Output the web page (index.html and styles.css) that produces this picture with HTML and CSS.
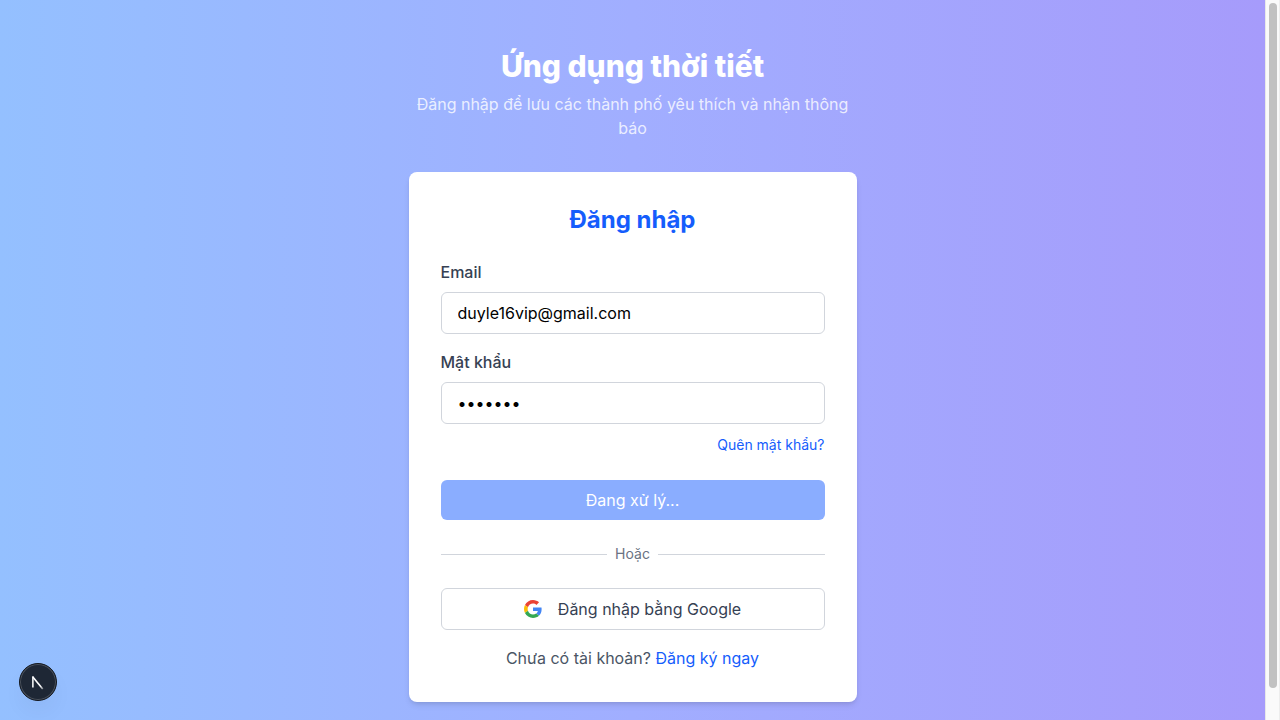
FILE: index.html
```html
<!DOCTYPE html>
<html lang="vi">
<head>
<meta charset="utf-8">
<meta name="viewport" content="width=device-width, initial-scale=1">
<title>Ứng dụng thời tiết</title>
<link rel="stylesheet" href="styles.css">
</head>
<body class="page">
<main class="screen">
  <div class="column">
    <header class="intro">
      <h1 class="intro-title">Ứng dụng thời tiết</h1>
      <p class="intro-text">Đăng nhập để lưu các thành phố yêu thích và nhận thông báo</p>
    </header>
    <section class="card">
      <h2 class="card-title">Đăng nhập</h2>
      <form class="form">
        <div class="field">
          <label class="label" for="email">Email</label>
          <input class="input" id="email" type="email" value="duyle16vip@gmail.com">
        </div>
        <div class="field">
          <label class="label" for="password">Mật khẩu</label>
          <input class="input" id="password" type="password" value="1234567">
        </div>
        <div class="forgot"><a class="link forgot-link" href="#">Quên mật khẩu?</a></div>
        <button class="submit" type="submit" disabled>Đang xử lý...</button>
      </form>
      <div class="divider">Hoặc</div>
      <button class="google" type="button">
        <svg class="google-icon" viewBox="0 0 48 48" aria-hidden="true">
          <path fill="#EA4335" d="M24 9.5c3.54 0 6.71 1.22 9.21 3.6l6.85-6.85C35.9 2.38 30.47 0 24 0 14.62 0 6.51 5.38 2.56 13.22l7.98 6.19C12.43 13.72 17.74 9.5 24 9.5z"/>
          <path fill="#4285F4" d="M46.98 24.55c0-1.57-.15-3.09-.38-4.55H24v9.02h12.94c-.58 2.96-2.26 5.48-4.78 7.18l7.73 6c4.51-4.18 7.09-10.36 7.09-17.65z"/>
          <path fill="#FBBC05" d="M10.53 28.59c-.48-1.45-.76-2.99-.76-4.59s.27-3.14.76-4.59l-7.98-6.19C.92 16.46 0 20.12 0 24c0 3.88.92 7.54 2.56 10.78l7.97-6.19z"/>
          <path fill="#34A853" d="M24 48c6.48 0 11.93-2.13 15.89-5.81l-7.73-6c-2.15 1.45-4.92 2.3-8.16 2.3-6.26 0-11.57-4.22-13.47-9.91l-7.98 6.19C6.51 42.62 14.62 48 24 48z"/>
        </svg>
        <span>Đăng nhập bằng Google</span>
      </button>
      <p class="signup">Chưa có tài khoản? <a class="link" href="#">Đăng ký ngay</a></p>
    </section>
  </div>
</main>
<button class="dev-badge" type="button" aria-label="Dev Tools">
  <svg class="dev-icon" viewBox="0 0 38 38" aria-hidden="true">
    <defs>
      <linearGradient id="fade" gradientUnits="userSpaceOnUse" x1="19" y1="19" x2="25" y2="27">
        <stop offset="0.5" stop-color="#fff"/>
        <stop offset="1" stop-color="#fff" stop-opacity="0.3"/>
      </linearGradient>
    </defs>
    <path d="M13.6 13.6L24 26.4" fill="none" stroke="url(#fade)" stroke-width="1.7"/>
    <path d="M13.6 24.8V13" stroke="#fff" stroke-width="1.6"/>
  </svg>
</button>
<div class="scrollbar" aria-hidden="true"><div class="scrollbar-thumb"></div></div>
</body>
</html>
```

FILE: styles.css
```css
*, *::before, *::after { box-sizing: border-box; }

.page {
  margin: 0;
  padding-right: 15px;
  height: 100vh;
  overflow: hidden;
  font-family: Inter, "Noto Sans", sans-serif;
  font-size: 16px;
  line-height: 24px;
  color: #000;
}

.screen {
  min-height: 100vh;
  padding: 48px 16px;
  display: flex;
  justify-content: center;
  background: linear-gradient(to right, #94c0ff, #a1aeff 50%, #a69bfb);
}

.column { width: 100%; max-width: 448px; }

.intro { margin-bottom: 32px; text-align: center; }
.intro-title {
  margin: 0 0 8px;
  font-size: 30px;
  line-height: 36px;
  font-weight: 800;
  color: #fff;
}
.intro-text { margin: 0; color: rgba(255, 255, 255, 0.8); }

.card {
  padding: 32px;
  border-radius: 8px;
  background: #fff;
  box-shadow: 0 4px 6px -1px rgba(0, 0, 0, 0.1), 0 2px 4px -2px rgba(0, 0, 0, 0.1);
}
.card-title {
  margin: 0 0 24px;
  font-size: 24px;
  line-height: 32px;
  font-weight: 700;
  text-align: center;
  color: #155dfc;
}

.field { margin-bottom: 16px; }
.label {
  display: block;
  margin-bottom: 8px;
  font-weight: 500;
  color: #364153;
}
.input {
  display: block;
  width: 100%;
  height: 42px;
  padding: 8px 16px;
  border: 1px solid #d1d5dc;
  border-radius: 6px;
  background: #fff;
  font: inherit;
  color: #000;
}

.link { color: #155dfc; text-decoration: none; }
.forgot { margin: -8px 0 24px; text-align: right; }
.forgot-link { font-size: 14px; line-height: 20px; }

.submit, .google {
  width: 100%;
  border-radius: 6px;
  font: inherit;
}
.submit {
  display: block;
  padding: 8px 16px;
  border: 0;
  background: #8aadff;
  color: #fff;
}

.divider {
  display: flex;
  align-items: center;
  gap: 8px;
  margin: 24px 0;
  font-size: 14px;
  line-height: 20px;
  color: #6a7282;
}
.divider::before, .divider::after {
  content: "";
  flex: 1;
  height: 1px;
  background: #d1d5dc;
}

.google {
  display: flex;
  align-items: center;
  justify-content: center;
  gap: 16px;
  padding: 8px 16px;
  border: 1px solid #d1d5dc;
  background: #fff;
  color: #364153;
}
.google-icon { width: 18px; height: 18px; }

.signup { margin: 16px 0 0; text-align: center; color: #4a5565; }

.dev-badge {
  position: fixed;
  left: 19px;
  bottom: 19px;
  width: 38px;
  height: 38px;
  padding: 0;
  border: 1px solid #15191f;
  border-radius: 50%;
  background: #1e2735;
  box-shadow: inset 0 0 0 1px #4b525d, 0 12px 24px -4px rgba(0, 0, 0, 0.06);
}
.dev-icon { display: block; width: 36px; height: 36px; }

.scrollbar {
  position: fixed;
  top: 0;
  right: 0;
  bottom: 0;
  width: 15px;
  padding: 3px;
  border-left: 1px solid #e8e8e8;
  border-right: 1px solid #ededed;
  background: #fafafa;
}
.scrollbar-thumb {
  width: 8px;
  height: 96%;
  border-radius: 4px;
  background: #c1c1c1;
}
```
